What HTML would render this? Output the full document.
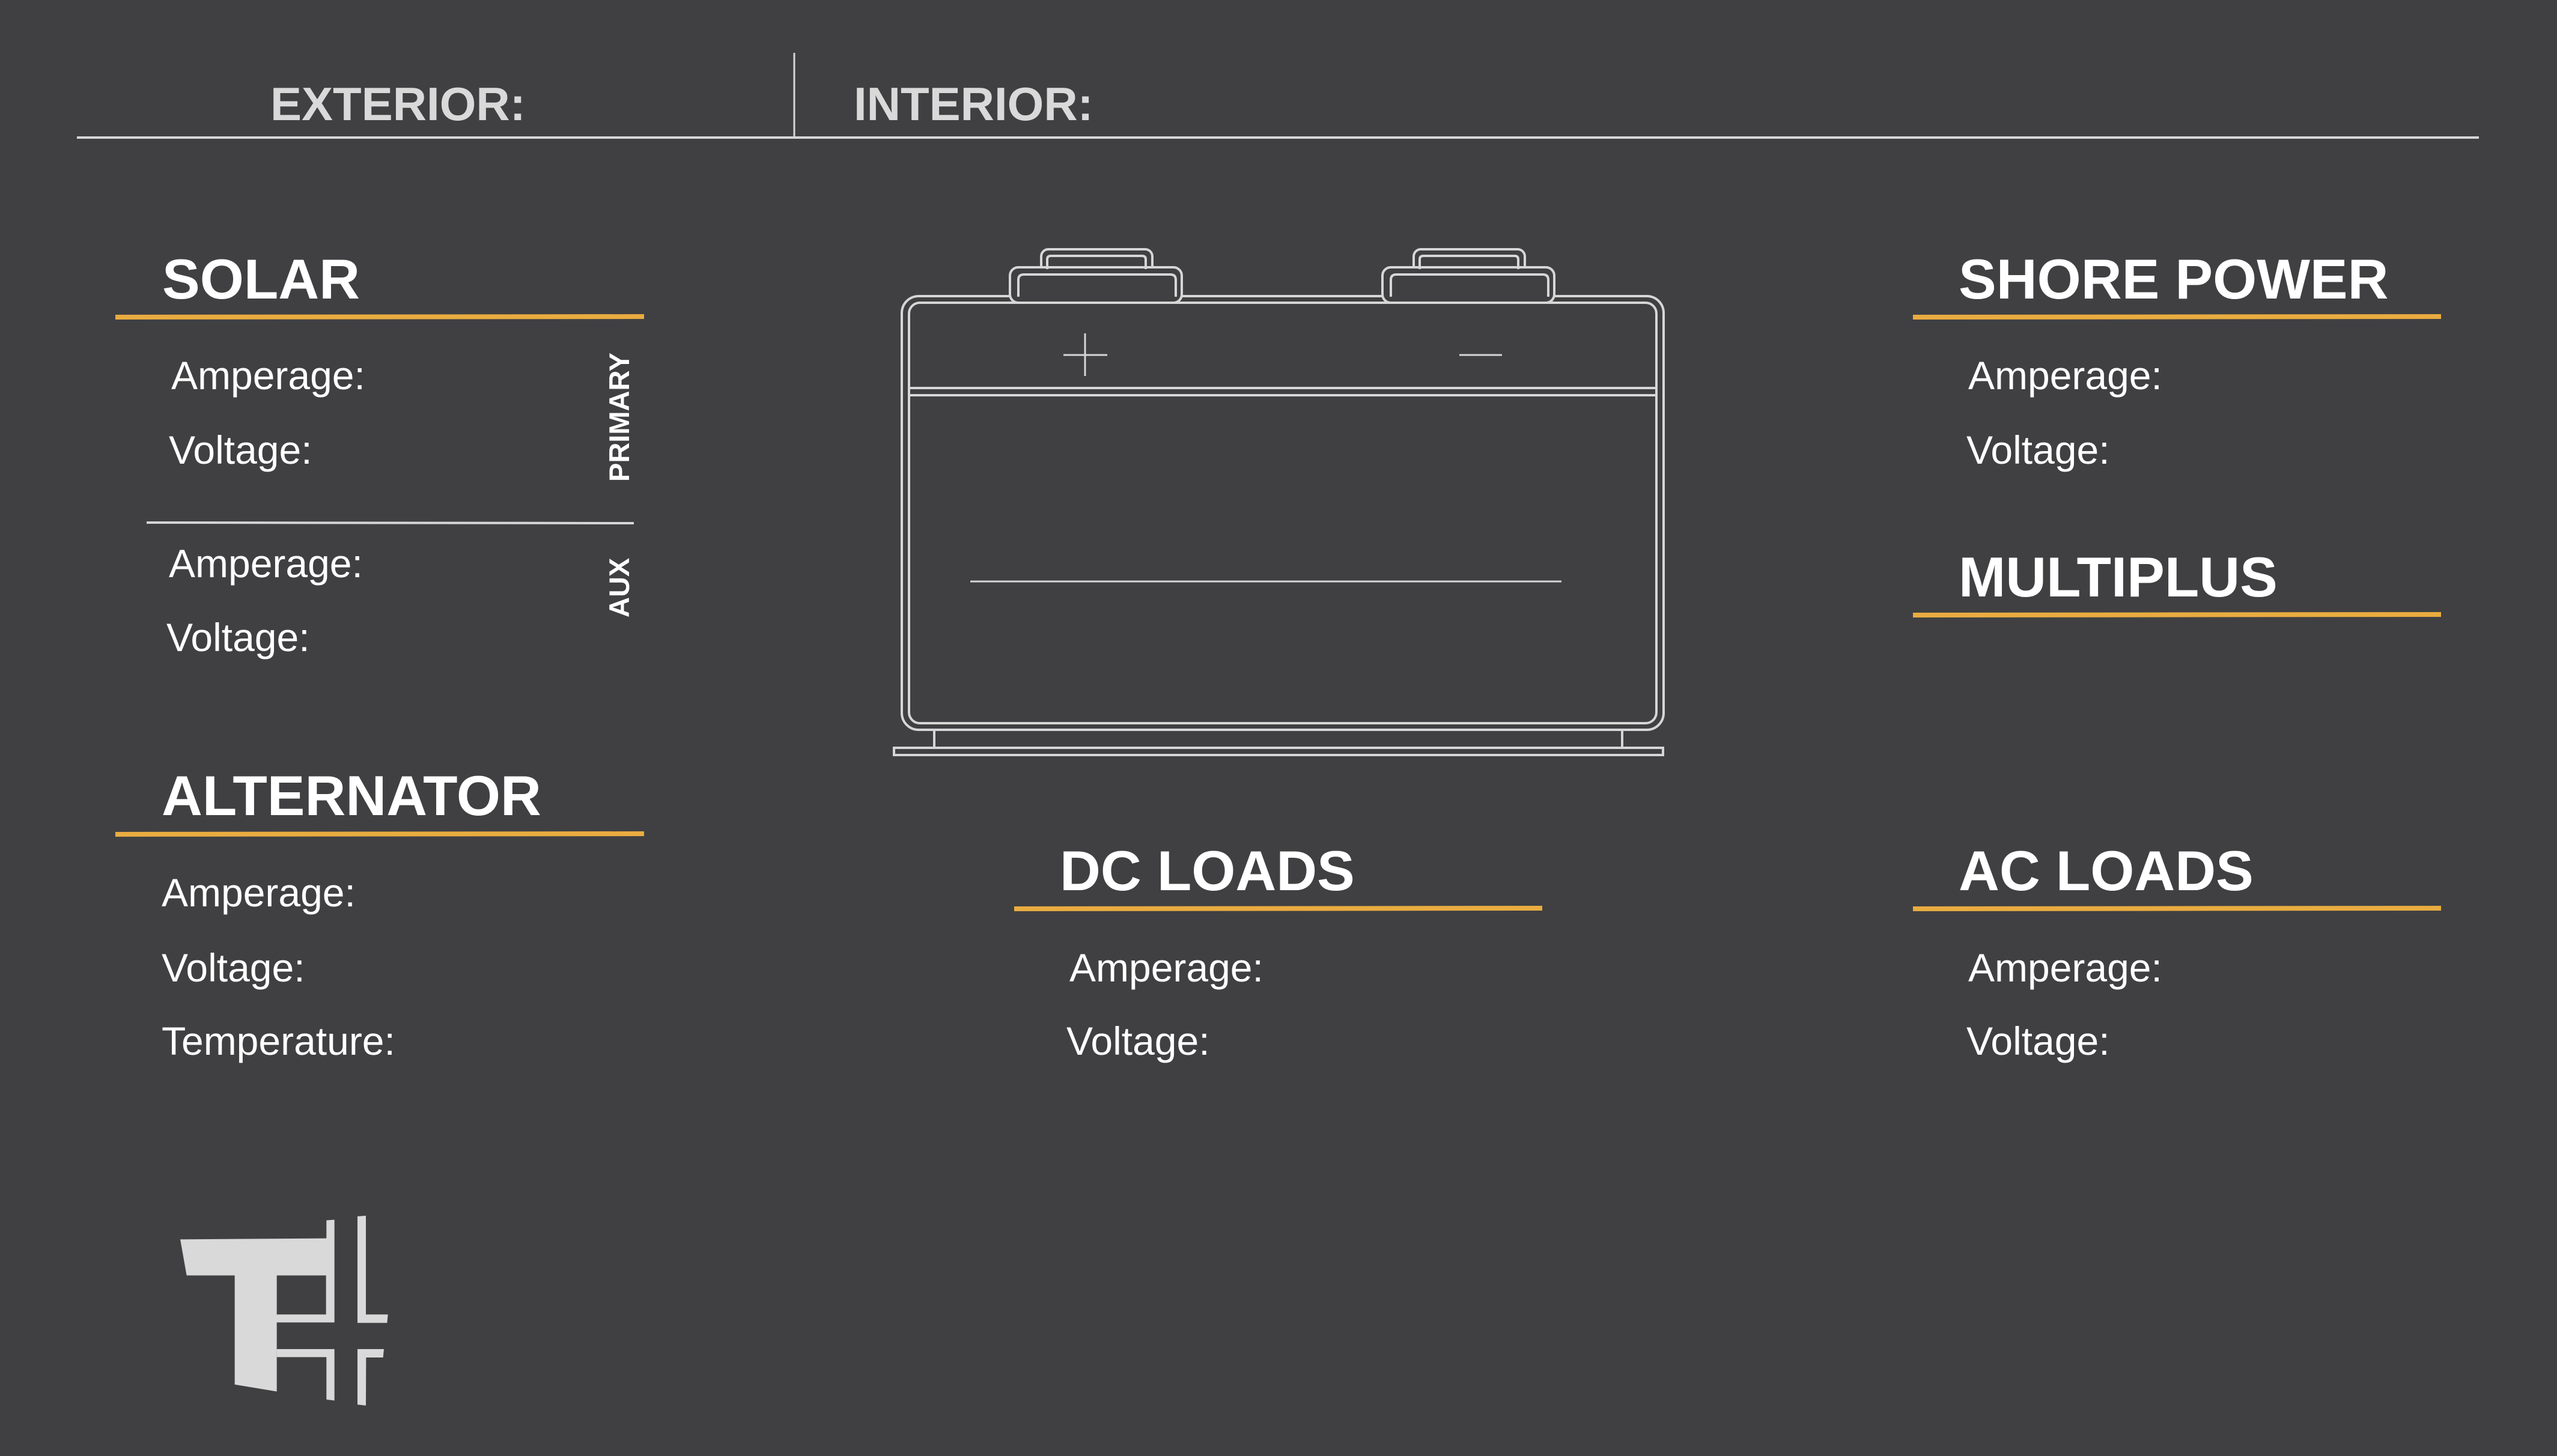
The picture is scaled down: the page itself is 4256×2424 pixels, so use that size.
<!DOCTYPE html>
<html><head><meta charset="utf-8"><style>
html,body{margin:0;padding:0;background:#404042;}
svg{display:block}
</style></head><body>
<svg width="4256" height="2424" viewBox="0 0 4256 2424" xmlns="http://www.w3.org/2000/svg">
<rect width="4256" height="2424" fill="#404042"/>
<!-- battery -->
<g stroke="#d6d6d6" stroke-width="4" fill="#404042">
<rect x="1501" y="493" width="1268" height="722" rx="28"/>
<rect x="1733" y="415" width="185" height="40" rx="12"/>
<rect x="1681" y="445" width="286" height="59" rx="14"/>
<rect x="2353" y="415" width="185" height="40" rx="12"/>
<rect x="2301" y="445" width="286" height="59" rx="14"/>
<rect x="1513" y="504" width="1244" height="700" rx="18"/>
<path d="M1743 448 V432 Q1743 426 1749 426 H1901 Q1907 426 1907 432 V448" fill="none"/>
<path d="M2363 448 V432 Q2363 426 2369 426 H2521 Q2527 426 2527 432 V448" fill="none"/>
<path d="M1695 494 V466 Q1695 457 1704 457 H1948 Q1957 457 1957 466 V494" fill="none"/>
<path d="M2315 494 V466 Q2315 457 2324 457 H2568 Q2577 457 2577 466 V494" fill="none"/>
<line x1="1513" y1="646" x2="2757" y2="646"/>
<line x1="1513" y1="658" x2="2757" y2="658"/>
<line x1="1615" y1="968" x2="2599" y2="968" stroke-width="3"/>
<line x1="1770" y1="591" x2="1843" y2="591" stroke-width="3"/>
<line x1="1806" y1="555" x2="1806" y2="626" stroke-width="3"/>
<line x1="2429" y1="591" x2="2500" y2="591" stroke-width="3"/>
<line x1="1555" y1="1215" x2="1555" y2="1245"/>
<line x1="2700" y1="1215" x2="2700" y2="1245"/>
<rect x="1488" y="1245" width="1280" height="12"/>
</g>
<!-- header -->
<line x1="128" y1="229" x2="4126" y2="229" stroke="#d6d6d6" stroke-width="4"/>
<line x1="1322" y1="88" x2="1322" y2="229" stroke="#d6d6d6" stroke-width="3"/>
<g font-family="Liberation Sans, sans-serif" font-weight="bold" fill="#d9d9d9" font-size="78">
<text x="450" y="200">EXTERIOR:</text>
<text x="1421" y="200">INTERIOR:</text>
</g>
<!-- headings -->
<g font-family="Liberation Sans, sans-serif" font-weight="bold" fill="#ffffff" font-size="94">
<text x="270" y="497">SOLAR</text>
<text x="3260" y="497">SHORE POWER</text>
<text x="3260" y="993">MULTIPLUS</text>
<text x="269" y="1357">ALTERNATOR</text>
<text x="1764" y="1482">DC LOADS</text>
<text x="3260" y="1482">AC LOADS</text>
</g>
<g stroke="#e9ac40" stroke-width="8">
<line x1="192" y1="528" x2="1072" y2="527"/>
<line x1="3184" y1="528" x2="4063" y2="527"/>
<line x1="3184" y1="1024" x2="4063" y2="1023"/>
<line x1="192" y1="1389" x2="1072" y2="1388"/>
<line x1="1688" y1="1513" x2="2567" y2="1512"/>
<line x1="3184" y1="1513" x2="4063" y2="1512"/>
</g>
<!-- labels -->
<g font-family="Liberation Sans, sans-serif" fill="#ffffff" font-size="66">
<text x="285" y="648">Amperage:</text>
<text x="281" y="772">Voltage:</text>
<text x="281" y="961">Amperage:</text>
<text x="277" y="1084">Voltage:</text>
<text x="3276" y="648">Amperage:</text>
<text x="3273" y="772">Voltage:</text>
<text x="269" y="1509">Amperage:</text>
<text x="269" y="1634">Voltage:</text>
<text x="269" y="1756">Temperature:</text>
<text x="1780" y="1634">Amperage:</text>
<text x="1775" y="1756">Voltage:</text>
<text x="3276" y="1634">Amperage:</text>
<text x="3273" y="1756">Voltage:</text>
</g>
<line x1="244" y1="870" x2="1055" y2="871" stroke="#d6d6d6" stroke-width="4"/>
<g font-family="Liberation Sans, sans-serif" font-weight="bold" fill="#ffffff" font-size="47">
<text transform="translate(1047,802) rotate(-90)">PRIMARY</text>
<text transform="translate(1047,1028) rotate(-90)">AUX</text>
</g>
<!-- logo -->
<svg x="250" y="1980" width="420" height="380" viewBox="0 0 1260 1140">
<g fill="#d9d9d9">
<polygon points="150,250 880,245 880,155 920,152 920,665 632,665 632,625 878,625 878,430 632,430 632,1010 422,975 422,430 182,430"/>
<polygon points="632,798 920,798 920,1055 880,1050 880,838 632,838"/>
<polygon points="1035,135 1077,132 1077,625 1187,625 1183,667 1035,667"/>
<polygon points="1035,798 1167,798 1163,840 1078,840 1077,1080 1035,1075"/>
</g>
</svg>
</svg>
</body></html>
